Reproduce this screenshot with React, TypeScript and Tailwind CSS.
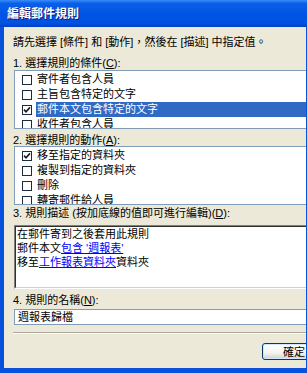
import React from 'react';

const font = 'font-["Liberation_Sans","Noto_Sans_CJK_TC",sans-serif]';

function Check({ checked }: { checked?: boolean }) {
  return (
    <span className="w-[10px] h-[10px] border border-[#1c2c40] bg-white flex items-center justify-center shrink-0">
      {checked && (
        <svg width="8" height="8" viewBox="0 0 8 8">
          <path d="M1 3.6 L3 5.8 L7 1.4" fill="none" stroke="#1a1a1a" strokeWidth="1.6" />
        </svg>
      )}
    </span>
  );
}

function Row({ label, checked, selected }: { label: string; checked?: boolean; selected?: boolean }) {
  return (
    <div className="h-[15px] flex items-center">
      <span className="ml-[7px]">
        <Check checked={checked} />
      </span>
      <span
        className={
          'ml-[4px] pl-[1px] flex-1 h-[15px] leading-[15px] ' +
          (selected ? 'bg-[#316AC5] text-white' : 'text-black')
        }
      >
        {label}
      </span>
    </div>
  );
}

function Label({ text, keyChar, className }: { text: string; keyChar: string; className?: string }) {
  return (
    <div className={'h-[12px] leading-[12px] text-black ' + (className ?? '')}>
      {text}(<span className="underline">{keyChar}</span>):
    </div>
  );
}

export default function App() {
  const conditions = [
    { label: '寄件者包含人員' },
    { label: '主旨包含特定的文字' },
    { label: '郵件本文包含特定的文字', checked: true, selected: true },
    { label: '收件者包含人員' },
  ];
  const actions = [
    { label: '移至指定的資料夾', checked: true },
    { label: '複製到指定的資料夾' },
    { label: '刪除' },
    { label: '轉寄郵件給人員' },
  ];

  return (
    <div className={'w-[307px] h-[373px] overflow-hidden flex flex-col text-[11px] ' + font}>
      {/* Title bar */}
      <div className="h-[27px] shrink-0 flex items-center pl-[7px] bg-[linear-gradient(to_bottom,#3b8dfa_0%,#0a5fe8_12%,#0055e5_50%,#0052e0_85%,#0040c8_100%)]">
        <span className="text-white font-bold text-[12px] leading-[14px] [text-shadow:1px_1px_0_#0a1e78]">
          編輯郵件規則
        </span>
      </div>

      {/* Body */}
      <div className="flex-1 flex border-l-4 border-r border-b-[5px] border-[#0851dc] overflow-hidden">
        <div className="flex-1 bg-[#ECE9D8] overflow-hidden pl-[9px] pt-[9px]">
          <div className="w-[330px] flex flex-col">
            <div className="h-[12px] leading-[12px] text-black">
              請先選擇 [條件] 和 [動作]，然後在 [描述] 中指定值。
            </div>

            <Label text="1. 選擇規則的條件" keyChar="C" className="mt-[9px]" />
            <div className="mt-[1px] ml-[1px] h-[59px] border border-[#7F9DB9] bg-white pt-[1px] overflow-hidden">
              {conditions.map((c) => (
                <Row key={c.label} {...c} />
              ))}
            </div>

            <Label text="2. 選擇規則的動作" keyChar="A" className="mt-[5px]" />
            <div className="ml-[1px] h-[59px] border border-[#7F9DB9] bg-white pt-[1px] overflow-hidden">
              {actions.map((c) => (
                <Row key={c.label} {...c} />
              ))}
            </div>

            <Label text="3. 規則描述 (按加底線的值即可進行編輯)" keyChar="D" className="mt-[2px]" />
            <div className="mt-[6px] ml-[1px] h-[64px] border border-t-[#808080] border-l-[#808080] border-r-white border-b-white">
              <div className="h-full border border-t-[#303030] border-l-[#303030] border-r-[#d4d0c8] border-b-[#d4d0c8] bg-white pl-[1px] text-black leading-[14px]">
                <div>在郵件寄到之後套用此規則</div>
                <div>
                  郵件本文<span className="text-[#0000ff] underline">包含 '週報表'</span>
                </div>
                <div>
                  移至<span className="text-[#0000ff] underline">工作報表資料夾</span>資料夾
                </div>
              </div>
            </div>

            <Label text="4. 規則的名稱" keyChar="N" className="mt-[5px]" />
            <div className="mt-[3px] ml-[1px] h-[16px] border border-[#7F9DB9] bg-white pl-[3px] leading-[14px] text-black">
              週報表歸檔
            </div>

            <div className="mt-[7px] h-[2px] border-t border-[#ACA899] border-b border-b-white" />

            <div className="mt-[9px] ml-[249px] w-[64px] h-[17px] rounded-[3px] border border-[#003C74] bg-[linear-gradient(to_bottom,#ffffff_0%,#f4f4f0_60%,#d6d0c5_100%)] shadow-[inset_0_0_0_1px_#cee7ff] flex items-center justify-center text-black leading-[14px]">
              確定
            </div>
          </div>
        </div>
      </div>
    </div>
  );
}
